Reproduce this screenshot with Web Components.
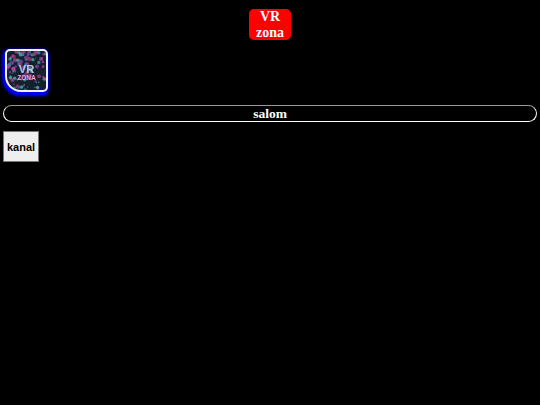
<!DOCTYPE html>
<html>
<head>
<meta charset="utf-8">
<title>VR zona</title>
<style>
  html, body { margin: 0; background: #000; }
  body { padding: 9px 3px 0; font-family: "Liberation Serif", serif; color: #fff; }
</style>
</head>
<body>
<vr-title>VR<br>zona</vr-title>
<vr-logo></vr-logo>
<vr-banner>salom</vr-banner>
<vr-button>kanal</vr-button>

<script>
class VrTitle extends HTMLElement {
    connectedCallback() {
        this.attachShadow({ mode: 'open' });
        this.shadowRoot.innerHTML = `
            <style>
                :host { display: flex; justify-content: center; }
                .box {
                    width: 42px;
                    height: 31px;
                    background: #ff0000;
                    border-radius: 5px;
                    text-align: center;
                    font: bold 14px/15.5px "Liberation Serif", serif;
                    color: #fff;
                }
            </style>
            <div class="box"><slot></slot></div>
        `;
    }
}

class VrLogo extends HTMLElement {
    connectedCallback() {
        this.attachShadow({ mode: 'open' });
        let dots = '';
        const colors = ['#3fb0a8', '#b8459c', '#3580b0', '#8445b0', '#50c8b4', '#a83a80'];
        for (let i = 0; i < 110; i++) {
            const x = (Math.sin(i * 12.9898) * 43758.5453 % 1 + 1) % 1 * 38;
            const y = (Math.sin(i * 78.233) * 24634.6345 % 1 + 1) % 1 * 38;
            const r = 0.7 + (i % 4) * 0.45;
            dots += `<circle cx="${x.toFixed(1)}" cy="${y.toFixed(1)}" r="${r}" fill="${colors[i % 6]}" opacity=".7"/>`;
        }
        this.shadowRoot.innerHTML = `
            <style>
                :host { display: block; width: 44px; margin: 9px 0 0 2px; }
                .pic {
                    position: relative;
                    box-sizing: border-box;
                    width: 43px;
                    height: 43px;
                    border: 2px solid #f0f0ff;
                    border-radius: 5px 5px 5px 16px;
                    box-shadow: -1px 2px 3px 2px #0000ff;
                    background: #16202c;
                    overflow: hidden;
                }
                svg { display: block; width: 100%; height: 100%; filter: blur(.7px); }
                .txt {
                    position: absolute;
                    left: 0; right: 0; top: 14px;
                    text-align: center;
                    font-family: "Liberation Sans", sans-serif;
                    font-weight: bold;
                }
                .vr { font-size: 11px; line-height: 9px; color: #b4ccf4; }
                .zona { font-size: 6.5px; line-height: 7px; color: #f7a4e4; }
            </style>
            <div class="pic">
                <svg viewBox="0 0 38 38">${dots}</svg>
                <div class="txt"><div class="vr">VR</div><div class="zona">ZONA</div></div>
            </div>
        `;
    }
}

class VrBanner extends HTMLElement {
    connectedCallback() {
        this.attachShadow({ mode: 'open' });
        this.shadowRoot.innerHTML = `
            <style>
                :host {
                    display: block;
                    box-sizing: border-box;
                    height: 17px;
                    margin-top: 13px;
                    border: 1px solid #fff;
                    border-top-color: #999;
                    border-radius: 9px;
                    text-align: center;
                    font: bold 13.5px/16px "Liberation Serif", serif;
                    color: #fff;
                }
            </style>
            <slot></slot>
        `;
    }
}

class VrButton extends HTMLElement {
    connectedCallback() {
        this.attachShadow({ mode: 'open' });
        this.shadowRoot.innerHTML = `
            <style>
                :host { display: block; margin-top: 9px; }
                button {
                    display: block;
                    box-sizing: border-box;
                    width: 36px;
                    height: 31px;
                    padding: 0;
                    background: #efefef;
                    border: 1px solid #767676;
                    font: bold 11px "Liberation Sans", sans-serif;
                    color: #000;
                }
            </style>
            <button><slot></slot></button>
        `;
    }
}

customElements.define('vr-title', VrTitle);
customElements.define('vr-logo', VrLogo);
customElements.define('vr-banner', VrBanner);
customElements.define('vr-button', VrButton);
</script>
</body>
</html>
